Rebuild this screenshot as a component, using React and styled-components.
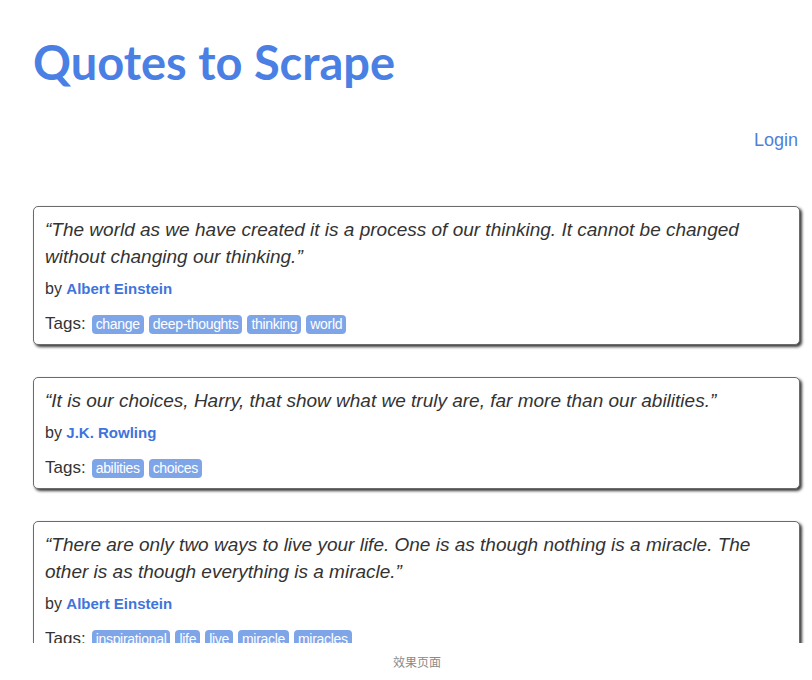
import React from "react";
import styled, { createGlobalStyle } from "styled-components";

const GlobalStyle = createGlobalStyle`
  body {
    margin: 0;
    background: #ffffff;
  }
`;

const Page = styled.div`
  width: 812px;
  height: 680px;
  display: flex;
  flex-direction: column;
  background: #fff;
`;

const Viewport = styled.div`
  height: 643px;
  overflow: hidden;
  padding: 0 12px 0 33px;
`;

const Title = styled.h1`
  margin: 0;
  padding-top: 34px;
  font-family: Lato, "Open Sans", sans-serif;
  font-weight: 700;
  font-size: 47px;
  line-height: 56px;
  color: #4a80e4;
`;

const LoginRow = styled.div`
  display: flex;
  justify-content: flex-end;
  margin-top: 38px;
  margin-right: 2px;
`;

const LoginLink = styled.a`
  font-family: "Liberation Sans", Arial, sans-serif;
  font-size: 18px;
  line-height: 24px;
  color: #4f7fd8;
  text-decoration: none;
`;

const List = styled.div`
  display: flex;
  flex-direction: column;
  gap: 32px;
  margin-top: 54px;
`;

const Card = styled.div`
  border: 1px solid #6b6b6b;
  border-radius: 5px;
  box-shadow: 2px 2px 3px #3a3a3a;
  padding: 9px 10px 8px 11px;
  background: #fff;
`;

const QuoteText = styled.div`
  font-family: "Liberation Sans", Arial, sans-serif;
  font-style: italic;
  font-size: 19px;
  line-height: 27px;
  color: #333;
`;

const ByLine = styled.div`
  margin-top: 8px;
  font-family: "Liberation Sans", Arial, sans-serif;
  font-size: 16px;
  line-height: 22px;
  color: #333;
`;

const Author = styled.a`
  font-weight: 700;
  font-size: 15px;
  color: #3f74dc;
  text-decoration: none;
`;

const TagRow = styled.div`
  margin-top: 12px;
  display: flex;
  align-items: center;
  height: 24px;
  font-family: "Liberation Sans", Arial, sans-serif;
  font-size: 17px;
  color: #333;
`;

const TagLabel = styled.span`
  margin-right: 6px;
`;

const Tag = styled.a`
  display: inline-block;
  margin-right: 5px;
  padding: 0 4px;
  height: 19px;
  line-height: 19px;
  border-radius: 4px;
  background: #7ea5e8;
  color: #fff;
  font-size: 14px;
  letter-spacing: -0.3px;
  text-decoration: none;
`;

const Caption = styled.div`
  flex: 1;
  display: flex;
  align-items: center;
  justify-content: center;
  padding-left: 22px;
  font-family: "Noto Sans CJK SC", sans-serif;
  font-size: 12px;
  color: #8a8a8a;
`;

const quotes = [
  {
    text: "“The world as we have created it is a process of our thinking. It cannot be changed without changing our thinking.”",
    author: "Albert Einstein",
    tags: ["change", "deep-thoughts", "thinking", "world"],
  },
  {
    text: "“It is our choices, Harry, that show what we truly are, far more than our abilities.”",
    author: "J.K. Rowling",
    tags: ["abilities", "choices"],
  },
  {
    text: "“There are only two ways to live your life. One is as though nothing is a miracle. The other is as though everything is a miracle.”",
    author: "Albert Einstein",
    tags: ["inspirational", "life", "live", "miracle", "miracles"],
  },
];

const App = () => (
  <Page>
    <GlobalStyle />
    <Viewport>
      <Title>Quotes to Scrape</Title>
      <LoginRow>
        <LoginLink href="#">Login</LoginLink>
      </LoginRow>
      <List>
        {quotes.map((q, i) => (
          <Card key={i}>
            <QuoteText>{q.text}</QuoteText>
            <ByLine>
              by <Author href="#">{q.author}</Author>
            </ByLine>
            <TagRow>
              <TagLabel>Tags:</TagLabel>
              {q.tags.map((t) => (
                <Tag key={t} href="#">
                  {t}
                </Tag>
              ))}
            </TagRow>
          </Card>
        ))}
      </List>
    </Viewport>
    <Caption>效果页面</Caption>
  </Page>
);

export default App;
